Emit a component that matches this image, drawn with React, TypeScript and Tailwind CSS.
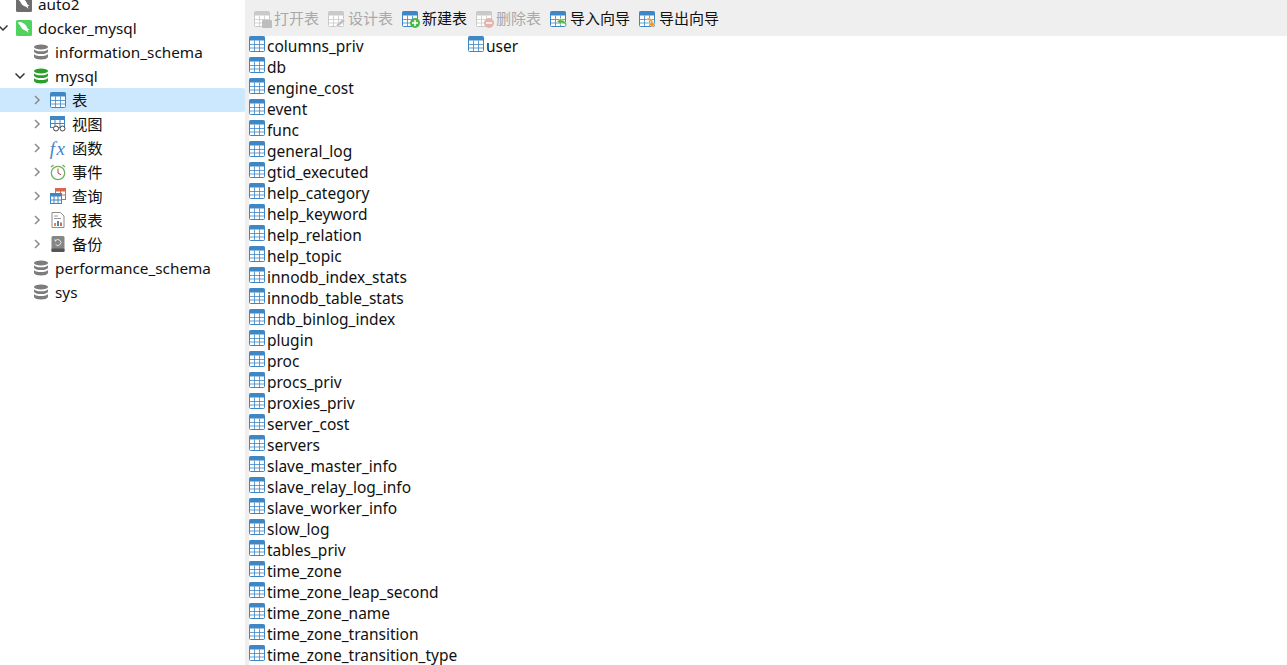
import React from "react";

const TABLES = [
  "columns_priv", "db", "engine_cost", "event", "func", "general_log", "gtid_executed",
  "help_category", "help_keyword", "help_relation", "help_topic", "innodb_index_stats",
  "innodb_table_stats", "ndb_binlog_index", "plugin", "proc", "procs_priv", "proxies_priv",
  "server_cost", "servers", "slave_master_info", "slave_relay_log_info", "slave_worker_info",
  "slow_log", "tables_priv", "time_zone", "time_zone_leap_second", "time_zone_name",
  "time_zone_transition", "time_zone_transition_type", "user",
];

const TableIcon = ({ color = "#3f86c4", className = "" }: { color?: string; className?: string }) => (
  <svg width="16" height="16" viewBox="0 0 16 16" className={`shrink-0 ${className}`}>
    <rect x="0.5" y="0.5" width="15" height="15" rx="1" fill="#fff" stroke={color} />
    <rect x="0.5" y="0.5" width="15" height="4" fill={color} />
    <path d="M5.5 4.500v11M10.500 4.500v11M0.500 8.500h15M0.500 12h15" stroke={color} strokeWidth="1" fill="none" opacity="0.8" />
  </svg>
);

const DbIcon = ({ color }: { color: string }) => (
  <svg width="16" height="16" viewBox="0 0 16 16" className="shrink-0">
    <ellipse cx="8" cy="3" rx="7" ry="2.600" fill={color} />
    <path d="M1 5.200c1 1.500 3.600 2.100 7 2.100s6-.6 7-2.100v2.600c-.6 1.600-3.400 2.300-7 2.300s-6.400-.7-7-2.300z" fill={color} />
    <path d="M1 10c1 1.500 3.600 2.100 7 2.100s6-.6 7-2.100v3c-.6 1.700-3.400 2.500-7 2.500s-6.400-.8-7-2.500z" fill={color} />
  </svg>
);

const Dolphin = ({ bg }: { bg: string }) => (
  <svg width="16" height="16" viewBox="0 0 16 16" className="shrink-0">
    <rect width="16" height="16" rx="1.500" fill={bg} />
    <path d="M2 2.500c1-.8 3.500-.3 5.500.8 2 1.100 3 2.700 3.500 4.200.3 1 1.500 1.500 2.500 2.500-.8.200-1.300.100-1.800 0 .2 1 .6 2 .8 3-.8-.8-1.500-1.800-2.500-2.300-2-.5-4-1.500-5-3.500C4.500 5.400 2.500 4.200 2 2.500z" fill="#fff" />
  </svg>
);

const Chevron = ({ open = false }: { open?: boolean }) => (
  <svg width="10" height="10" viewBox="0 0 10 10" className="shrink-0">
    <path
      d={open ? "M.5 2.500L5 7l4.500-4.500" : "M3 1l4 4-4 4"}
      fill="none"
      stroke={open ? "#333" : "#8a8a8a"}
      strokeWidth="1.500"
    />
  </svg>
);

const ViewIcon = () => (
  <svg width="16" height="16" viewBox="0 0 16 16" className="shrink-0">
    <rect x="0.500" y="0.500" width="14" height="11" fill="#fff" stroke="#3f86c4" />
    <rect x="0.500" y="0.500" width="14" height="3.500" fill="#3f86c4" />
    <path d="M5 4v8M10 4v8M0.500 7.500h14" stroke="#3f86c4" />
    <circle cx="6" cy="12.500" r="2.500" fill="#fff" stroke="#444" />
    <circle cx="12.500" cy="12.500" r="2.500" fill="#fff" stroke="#444" />
  </svg>
);

const ClockIcon = () => (
  <svg width="16" height="17" viewBox="0 0 16 17" className="shrink-0">
    <circle cx="8" cy="9" r="6.700" fill="#fff" stroke="#6fb05a" strokeWidth="1.300" />
    <path d="M8 4.500V9l3 1.800" fill="none" stroke="#b5483a" strokeWidth="1" />
    <path d="M1 3l2.500-2M15 3l-2.500-2" stroke="#6fb05a" strokeWidth="1.300" />
  </svg>
);

const QueryIcon = () => (
  <svg width="16" height="16" viewBox="0 0 16 16" className="shrink-0">
    <rect x="5.500" y="0.500" width="10" height="11" fill="#fff" stroke="#d8684c" />
    <rect x="5.500" y="0.500" width="10" height="3" fill="#d8684c" />
    <path d="M10.500 3v8M5.500 7h10" stroke="#d8684c" />
    <rect x="0.500" y="5.500" width="11" height="10" fill="#fff" stroke="#3f86c4" />
    <rect x="0.500" y="5.500" width="11" height="3" fill="#3f86c4" />
    <path d="M4 8v7M8 8v7M0.500 12h11" stroke="#3f86c4" />
  </svg>
);

const ReportIcon = () => (
  <svg width="14" height="16" viewBox="0 0 14 16" className="shrink-0">
    <path d="M1 .5h8.500L13 4v11.500H1z" fill="#fff" stroke="#8c8c8c" />
    <path d="M3 4h4M3 6.500h7" stroke="#9a9a9a" />
    <rect x="3" y="11" width="2" height="3" fill="#e28a3c" />
    <rect x="6" y="9" width="2" height="5" fill="#3f86c4" />
    <rect x="9" y="10.500" width="2" height="3.500" fill="#d8684c" />
  </svg>
);

const BackupIcon = () => (
  <svg width="14" height="16" viewBox="0 0 14 16" className="shrink-0">
    <rect x="0.500" width="13" height="16" rx="1.500" fill="#868686" />
    <rect x="0.500" y="12.500" width="13" height="3.500" rx="1" fill="#555" />
    <path d="M4.300 5a3 3 0 1 1 .3 3.500" fill="none" stroke="#e4e4e4" strokeWidth="1" />
    <path d="M3 3.500l2.500 .3-.8 2.200z" fill="#e4e4e4" />
  </svg>
);

const Row = ({
  indent,
  arrow,
  icon,
  label,
  selected = false,
}: {
  indent: string;
  arrow?: React.ReactNode;
  icon: React.ReactNode;
  label: string;
  selected?: boolean;
}) => (
  <div className={`flex h-6 items-center gap-[6px] rounded-r-[2px] ${indent} ${selected ? "bg-[#cce8ff]" : ""}`}>
    <span className="-mr-[6px] flex w-[21px] shrink-0 items-center justify-center pr-[5px]">{arrow}</span>
    <span className="flex w-[16px] shrink-0 items-center justify-center">{icon}</span>
    <span className="pt-[2px]">{label}</span>
  </div>
);

const ToolButton = ({ icon, label, disabled = false }: { icon: React.ReactNode; label: string; disabled?: boolean }) => (
  <div className={`flex items-center gap-[4px] ${disabled ? "text-[#a9a9a9]" : "text-[#111]"}`}>
    {icon}
    <span>{label}</span>
  </div>
);

const Badge = ({ icon, color = "#3f86c4" }: { icon: React.ReactNode; color?: string }) => (
  <span className="relative mt-[2px] h-4 w-4 shrink-0">
    <TableIcon color={color} />
    <span className="absolute -bottom-[1px] -right-[2px] flex">{icon}</span>
  </span>
);

const Dot = ({ bg, mark }: { bg: string; mark: string }) => (
  <svg width="10" height="10" viewBox="0 0 10 10">
    <circle cx="5" cy="5" r="5" fill={bg} />
    <path d={mark} stroke="#fff" strokeWidth="1.500" />
  </svg>
);

const Arrow = ({ color, d }: { color: string; d: string }) => (
  <svg width="11" height="10" viewBox="0 0 11 10">
    <path d={d} fill={color} stroke="#efefef" strokeWidth="0.500" />
  </svg>
);

export default function App() {
  return (
    <div className="flex h-[665px] w-[1287px] overflow-hidden bg-white font-['Noto_Sans','Noto_Sans_CJK_SC',sans-serif] text-[15.3px] leading-none text-[#111]">
      <aside className="-mt-[8px] w-[245px] shrink-0">
        <Row indent="-ml-[5px]" icon={<Dolphin bg="#6e6e6e" />} label="auto2" />
        <Row indent="-ml-[5px]" arrow={<Chevron open />} icon={<Dolphin bg="#4fd35c" />} label="docker_mysql" />
        <Row indent="pl-[12px]" icon={<DbIcon color="#7c7c7c" />} label="information_schema" />
        <Row indent="pl-[12px]" arrow={<Chevron open />} icon={<DbIcon color="#2aa02a" />} label="mysql" />
        <Row indent="pl-[29px]" arrow={<Chevron />} icon={<TableIcon />} label="表" selected />
        <Row indent="pl-[29px]" arrow={<Chevron />} icon={<ViewIcon />} label="视图" />
        <Row
          indent="pl-[29px]"
          arrow={<Chevron />}
          icon={<span className="font-['Liberation_Serif',serif] text-[19px] italic tracking-[1.5px] text-[#3f86c4]">fx</span>}
          label="函数"
        />
        <Row indent="pl-[29px]" arrow={<Chevron />} icon={<ClockIcon />} label="事件" />
        <Row indent="pl-[29px]" arrow={<Chevron />} icon={<QueryIcon />} label="查询" />
        <Row indent="pl-[29px]" arrow={<Chevron />} icon={<ReportIcon />} label="报表" />
        <Row indent="pl-[29px]" arrow={<Chevron />} icon={<BackupIcon />} label="备份" />
        <Row indent="pl-[12px]" icon={<DbIcon color="#7c7c7c" />} label="performance_schema" />
        <Row indent="pl-[12px]" icon={<DbIcon color="#7c7c7c" />} label="sys" />
      </aside>

      <main className="flex min-w-0 flex-1 flex-col">
        <div className="flex h-9 shrink-0 items-center gap-[9px] bg-[#efefef] pl-[9px] pr-2 text-[15px]">
          <ToolButton
            disabled
            icon={<Badge color="#c9c9c9" icon={<span className="block h-[8px] w-[10px] rounded-[1px] bg-[#bdbdbd]" />} />}
            label="打开表"
          />
          <ToolButton
            disabled
            icon={<Badge color="#c9c9c9" icon={<Arrow color="#bdbdbd" d="M1 9l1-3 6-5 2 2-6 5z" />} />}
            label="设计表"
          />
          <ToolButton icon={<Badge icon={<Dot bg="#4cb648" mark="M5 2v6M2 5h6" />} />} label="新建表" />
          <ToolButton disabled icon={<Badge color="#c9c9c9" icon={<Dot bg="#e5b3ac" mark="M2 5h6" />} />} label="删除表" />
          <ToolButton
            icon={<Badge icon={<Arrow color="#5bb544" d="M0 3.500L4 0v2c3 0 6 2 6 7-1-3-3-4-6-4v2z" />} />}
            label="导入向导"
          />
          <ToolButton
            icon={<Badge icon={<Arrow color="#ef9a27" d="M1 0c4 0 6 2 6 5h3L6 9.500 2 5h3C5 3 3.500 2 1 2z" />} />}
            label="导出向导"
          />
        </div>
        <div className="grid flex-1 grid-flow-col grid-cols-[219px_219px] grid-rows-[repeat(30,21px)] border-l-[4px] border-[#efefef] text-[15.5px]">
          {TABLES.map((name) => (
            <div key={name} className="flex h-[21px] items-center gap-[2px]">
              <TableIcon className="-mt-[5px]" />
              <span>{name}</span>
            </div>
          ))}
        </div>
      </main>
    </div>
  );
}
